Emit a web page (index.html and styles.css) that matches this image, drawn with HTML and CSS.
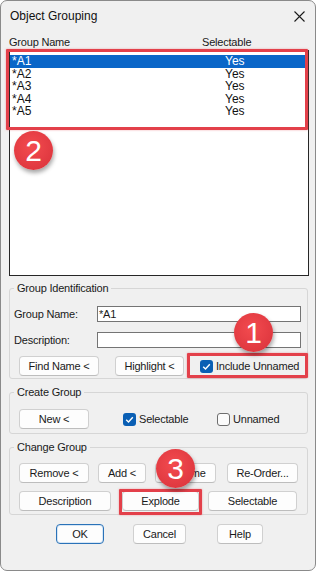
FILE: index.html
```html
<!DOCTYPE html>
<html lang="en">
<head>
    <meta charset="UTF-8">
    <meta name="viewport" content="width=device-width, initial-scale=1.0">
    <link rel="stylesheet" href="styles.css">
    <title>Object Grouping</title>
</head>
<body>
    <div class="dialog">
        <div class="titlebar">
            <span class="title">Object Grouping</span>
            <svg class="close" width="11" height="11" viewBox="0 0 11 11">
                <path d="M0.5 0.5 L10.5 10.5 M10.5 0.5 L0.5 10.5" stroke="#1b1b1b" stroke-width="1.1" fill="none"/>
            </svg>
        </div>

        <div class="body">
            <div class="list-head">
                <span class="col-name">Group Name</span>
                <span>Selectable</span>
            </div>
            <div class="listbox">
                <div class="row selected"><span class="cell-name">*A1</span><span>Yes</span></div>
                <div class="row"><span class="cell-name">*A2</span><span>Yes</span></div>
                <div class="row"><span class="cell-name">*A3</span><span>Yes</span></div>
                <div class="row"><span class="cell-name">*A4</span><span>Yes</span></div>
                <div class="row"><span class="cell-name">*A5</span><span>Yes</span></div>
            </div>

            <fieldset class="group">
                <legend>Group Identification</legend>
                <div class="field first">
                    <label>Group Name:</label>
                    <div class="input">*A1</div>
                </div>
                <div class="field">
                    <label>Description:</label>
                    <div class="input"></div>
                </div>
                <div class="btn-row ident-row">
                    <button class="btn w-find">Find Name &lt;</button>
                    <button class="btn w-highlight">Highlight &lt;</button>
                    <span class="check include">
                        <span class="box checked">
                            <svg width="13" height="13" viewBox="0 0 13 13"><path d="M3.2 6.8 L5.5 9 L9.8 4.2" stroke="#fff" stroke-width="1.4" fill="none"/></svg>
                        </span>
                        Include Unnamed
                    </span>
                </div>
            </fieldset>

            <fieldset class="group create">
                <legend>Create Group</legend>
                <div class="btn-row create-row">
                    <button class="btn w-new">New &lt;</button>
                    <span class="check sel">
                        <span class="box checked">
                            <svg width="13" height="13" viewBox="0 0 13 13"><path d="M3.2 6.8 L5.5 9 L9.8 4.2" stroke="#fff" stroke-width="1.4" fill="none"/></svg>
                        </span>
                        Selectable
                    </span>
                    <span class="check">
                        <span class="box"></span>
                        Unnamed
                    </span>
                </div>
            </fieldset>

            <fieldset class="group change">
                <legend>Change Group</legend>
                <div class="btn-row change-row1">
                    <button class="btn w-remove">Remove &lt;</button>
                    <button class="btn w-add">Add &lt;</button>
                    <button class="btn w-rename">Rename</button>
                    <button class="btn w-reorder">Re-Order...</button>
                </div>
                <div class="btn-row change-row2">
                    <button class="btn w-desc">Description</button>
                    <button class="btn w-explode">Explode</button>
                    <button class="btn w-selectable">Selectable</button>
                </div>
            </fieldset>

            <div class="btn-row dialog-row">
                <button class="btn default w-ok">OK</button>
                <button class="btn w-cancel">Cancel</button>
                <button class="btn w-help">Help</button>
            </div>
        </div>

        <!-- annotation marks -->
        <div class="mark mark-list"></div>
        <div class="mark mark-include"></div>
        <div class="mark mark-explode"></div>
        <div class="badge badge-2">2</div>
        <div class="badge badge-1">1</div>
        <div class="badge badge-3">3</div>
    </div>
</body>
</html>
```

FILE: styles.css
```css
body {
    margin: 0;
    background-color: #fff;
    font-family: "Liberation Sans", Arial, sans-serif;
    font-size: 11px;
    letter-spacing: -0.2px;
    color: #1a1a1a;
}

.dialog {
    position: relative;
    width: 316px;
    height: 571px;
    box-sizing: border-box;
    border: 1px solid #8a8a8a;
    border-radius: 7px;
    background-color: #f0f0f0;
    overflow: hidden;
}

.titlebar {
    height: 29px;
    display: flex;
    align-items: center;
    justify-content: space-between;
    padding: 0 10px 0 9px;
}

.title {
    font-size: 12px;
    letter-spacing: 0;
    color: #111;
}

.close {
    margin-top: 1px;
}

.body {
    padding: 6px 6px 0 8px;
}

.list-head {
    display: flex;
    line-height: 13px;
    height: 13px;
    margin-bottom: 1px;
}

.col-name {
    width: 193px;
}

.listbox {
    width: 300px;
    height: 226px;
    box-sizing: border-box;
    border: 1px solid #262626;
    background-color: #fff;
    padding: 4px 2px 0 0;
    font-size: 12px;
    letter-spacing: 0;
}

.row {
    display: flex;
    height: 12.5px;
    line-height: 12.5px;
    padding-left: 2px;
    color: #111;
}

.row.selected {
    background-color: #0a66c8;
    color: #fff;
}

.cell-name {
    width: 213px;
}

.group {
    margin: 6px 0 0 0;
    padding: 0 4px 2px 4px;
    width: 299px;
    box-sizing: border-box;
    border: 1px solid #d6d6d6;
    border-radius: 3px;
}

.group legend {
    padding: 0 3px;
    line-height: 13px;
    height: 13px;
}

.group.create {
    margin-top: 7px;
    padding-bottom: 4px;
}

.group.change {
    margin-top: 7px;
    padding-bottom: 3px;
}

.field {
    display: flex;
    align-items: center;
    height: 16px;
    margin-top: 10px;
}

.field.first {
    margin-top: 11px;
}

.field label {
    width: 83px;
}

.input {
    width: 204px;
    height: 16px;
    box-sizing: border-box;
    border: 1px solid #747474;
    background-color: #fff;
    padding-left: 1px;
    line-height: 14px;
}

.btn-row {
    display: flex;
    align-items: center;
    padding-left: 5px;
    height: 20px;
}

.ident-row {
    margin-top: 8px;
}

.create-row {
    margin-top: 10px;
}

.change-row1 {
    margin-top: 9px;
}

.change-row2 {
    margin-top: 8px;
}

.dialog-row {
    margin-top: 9px;
    padding-left: 47px;
}

.btn {
    height: 20px;
    box-sizing: border-box;
    padding: 0;
    border: 1px solid #d0d0d0;
    border-bottom-color: #bdbdbd;
    border-radius: 4px;
    background-color: #fdfdfd;
    font-family: "Liberation Sans", Arial, sans-serif;
    font-size: 11px;
    letter-spacing: -0.2px;
    color: #1a1a1a;
}

.btn.default {
    border: 1px solid #2a72b8;
    box-shadow: inset 0 0 0 1px #d6e6f5;
}

.w-find { width: 80px; }
.w-highlight { width: 69px; margin-left: 16px; }
.w-new { width: 70px; }
.w-remove { width: 70px; }
.w-add { width: 48px; margin-left: 9px; }
.w-rename { width: 61px; margin-left: 9px; }
.w-reorder { width: 71px; margin-left: 11px; }
.w-desc { width: 92px; }
.w-explode { width: 77px; margin-left: 11px; }
.w-selectable { width: 89px; margin-left: 9px; }
.w-ok { width: 48px; }
.w-cancel { width: 53px; margin-left: 29px; }
.w-help { width: 46px; margin-left: 31px; }

.check {
    display: flex;
    align-items: center;
    gap: 3px;
}

.check.include {
    margin-left: 16px;
}

.check.sel {
    margin-left: 34px;
    width: 94px;
}

.box {
    width: 13px;
    height: 13px;
    box-sizing: border-box;
    border: 1px solid #6e6e6e;
    border-radius: 3px;
    background-color: #fbfbfb;
}

.box.checked {
    border: none;
    background-color: #0a5fb4;
}

.box svg {
    display: block;
}

/* red annotation boxes */
.mark {
    position: absolute;
    box-sizing: border-box;
    border: 3px solid #e3404a;
    border-radius: 1px;
    box-shadow: 0 0 2px rgba(227, 64, 74, 0.5);
}

.mark-list {
    left: 5px;
    top: 48px;
    width: 302px;
    height: 81px;
}

.mark-include {
    left: 186px;
    top: 352px;
    width: 121px;
    height: 25px;
}

.mark-explode {
    left: 118px;
    top: 488px;
    width: 83px;
    height: 26px;
}

.badge {
    position: absolute;
    width: 39px;
    height: 39px;
    border-radius: 50%;
    background: radial-gradient(circle at 45% 40%, #f34b4f, #d8313a);
    box-shadow: 1px 3px 4px rgba(0, 0, 0, 0.35);
    color: #fff;
    font-size: 30px;
    letter-spacing: 0;
    line-height: 39px;
    text-align: center;
}

.badge-2 {
    left: 13px;
    top: 130px;
}

.badge-1 {
    left: 233px;
    top: 312px;
}

.badge-3 {
    left: 155px;
    top: 448px;
}
```
